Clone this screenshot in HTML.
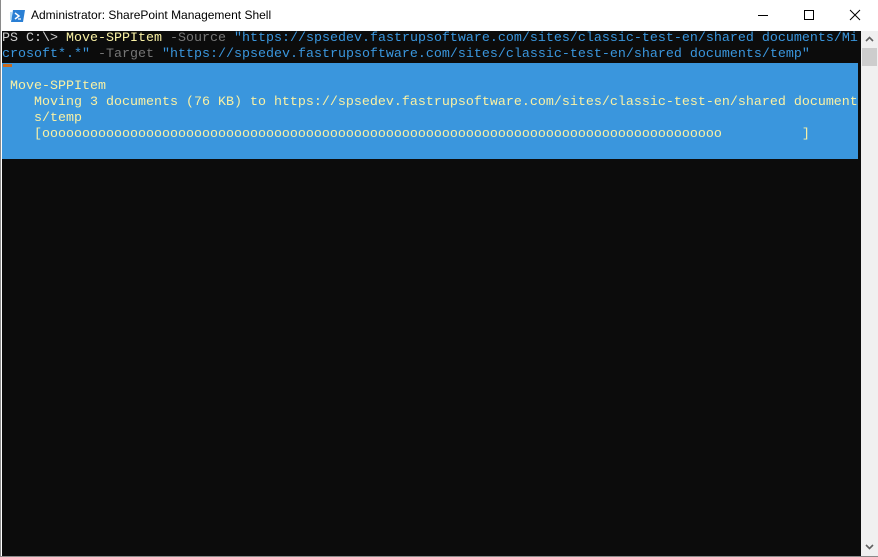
<!DOCTYPE html>
<html><head><meta charset="utf-8"><style>
*{margin:0;padding:0;box-sizing:border-box}
body{width:878px;height:557px;background:#fff;position:relative;overflow:hidden;font-family:"Liberation Sans",sans-serif}
.win{position:absolute;left:0;top:0;width:878px;height:557px;border:1px solid #8a8a8a;border-top:none}
.title{position:absolute;left:0;top:0;width:878px;height:31px;background:#fff}
.title .t{position:absolute;left:30px;top:8px;font-size:12px;color:#000}
.con{position:absolute;left:1px;top:31px;width:859px;height:525px;background:#0c0c0c;font-family:"Liberation Mono",monospace;font-size:13.33px;line-height:16px;overflow:hidden}
.row{height:16px;width:859px;color:#cccccc;white-space:pre;overflow:hidden}
.sel{position:absolute;left:0;top:32px;width:856px;height:96px;background:#3a96dd}
.sel .row{color:#f9f1a5}
.sb{position:absolute;left:860px;top:31px;width:17px;height:525px;background:#f0f0f0}
.thumb{position:absolute;left:1px;top:17px;width:15px;height:18px;background:#cdcdcd}
</style></head><body>
<div class="win">
<div class="title">
<svg style="position:absolute;left:9px;top:9px" width="16" height="14" viewBox="0 0 16 14"><path d="M3 1H15L13 13H1Z" fill="#2a7fd4"/><path d="M5 4L9 7L5 10" stroke="#fff" stroke-width="1.5" fill="none"/><path d="M8 10H11" stroke="#fff" stroke-width="1.2"/><path d="M1 3V11" stroke="#9cd0f5" stroke-width="1.5"/></svg>
<span class="t">Administrator: SharePoint Management Shell</span>
<svg style="position:absolute;left:756px;top:9px" width="12" height="12"><path d="M1 6.5H11" stroke="#000"/></svg>
<svg style="position:absolute;left:802px;top:9px" width="12" height="12"><rect x="1.5" y="1.5" width="9" height="9" fill="none" stroke="#000"/></svg>
<svg style="position:absolute;left:848px;top:9px" width="12" height="12"><path d="M1 1L11 11M11 1L1 11" stroke="#000"/></svg>
</div>
<div class="con"><div class="row">PS C:\&gt; <span style="color:#f9f1a5">Move-SPPItem</span> <span style="color:#767676">-Source</span> <span style="color:#3a96dd">"https://spsedev.fastrupsoftware.com/sites/classic-test-en/shared documents/Mi</span></div><div class="row"><span style="color:#3a96dd">crosoft*.*"</span> <span style="color:#767676">-Target</span> <span style="color:#3a96dd">"https://spsedev.fastrupsoftware.com/sites/classic-test-en/shared documents/temp"</span></div><div class="sel"><div style="position:absolute;left:1px;top:1px;width:9px;height:3px;background:#c86a1e"></div><div class="row"></div><div class="row"> Move-SPPItem</div><div class="row">    Moving 3 documents (76 KB) to https://spsedev.fastrupsoftware.com/sites/classic-test-en/shared document</div><div class="row">    s/temp</div><div class="row">    [ooooooooooooooooooooooooooooooooooooooooooooooooooooooooooooooooooooooooooooooooooooo          ]</div><div class="row"></div></div></div>
<div class="sb">
<svg style="position:absolute;left:4px;top:5px" width="9" height="6"><path d="M1 5L4.5 1.5L8 5" stroke="#606060" stroke-width="1.6" fill="none"/></svg>
<div class="thumb"></div>
<svg style="position:absolute;left:4px;top:513px" width="9" height="6"><path d="M1 1L4.5 4.5L8 1" stroke="#606060" stroke-width="1.6" fill="none"/></svg>
</div>
</div>
</body></html>
